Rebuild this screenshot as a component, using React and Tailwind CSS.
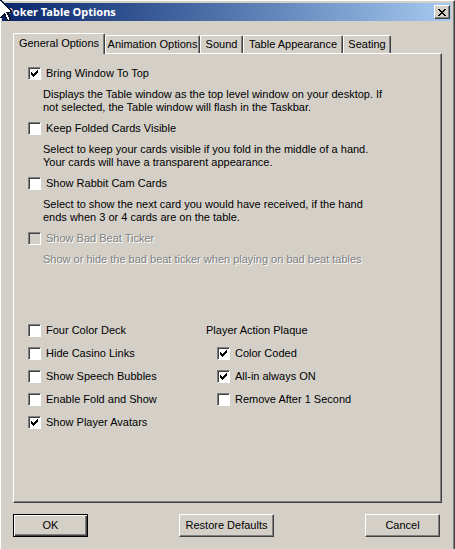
import { useState } from "react";

const raised =
  "border border-t-white border-l-white border-b-[#404040] border-r-[#404040] bg-[#d4d0c8] shadow-[inset_-1px_-1px_0_#808080]";

const behaviour = [
  {
    id: "top",
    label: "Bring Window To Top",
    checked: true,
    lines: [
      "Displays the Table window as the top level window on your desktop. If",
      "not selected, the Table window will flash in the Taskbar.",
    ],
  },
  {
    id: "folded",
    label: "Keep Folded Cards Visible",
    lines: [
      "Select to keep your cards visible if you fold in the middle of a hand.",
      "Your cards will have a transparent appearance.",
    ],
  },
  {
    id: "rabbit",
    label: "Show Rabbit Cam Cards",
    lines: [
      "Select to show the next card you would have received, if the hand",
      "ends when 3 or 4 cards are on the table.",
    ],
  },
  {
    id: "badbeat",
    label: "Show Bad Beat Ticker",
    disabled: true,
    lines: ["Show or hide the bad beat ticker when playing on bad beat tables"],
  },
];

const display = [
  { id: "deck", label: "Four Color Deck" },
  { id: "links", label: "Hide Casino Links" },
  { id: "bubbles", label: "Show Speech Bubbles" },
  { id: "fold", label: "Enable Fold and Show" },
  { id: "avatars", label: "Show Player Avatars", checked: true },
];

const plaque = [
  { id: "color", label: "Color Coded", checked: true },
  { id: "allin", label: "All-in always ON", checked: true },
  { id: "remove", label: "Remove After 1 Second" },
];

const tabs = [
  { label: "General Options", width: "w-[92px]" },
  { label: "Animation Options", width: "w-[95px]" },
  { label: "Sound", width: "w-[43px]" },
  { label: "Table Appearance", width: "w-[100px]" },
  { label: "Seating", width: "w-[48px]" },
];

function CheckOption({ id, label, checked = false, disabled = false }) {
  const [on, setOn] = useState(checked);
  return (
    <div className="flex h-[13px] items-center gap-[5px]">
      <span className="grid size-[13px] shrink-0">
        <input
          id={id}
          type="checkbox"
          checked={on}
          disabled={disabled}
          onChange={() => setOn(!on)}
          className="col-start-1 row-start-1 size-[13px] appearance-none border border-t-[#808080] border-r-white border-b-white border-l-[#808080] bg-white shadow-[inset_1px_1px_0_#404040] disabled:bg-[#d4d0c8]"
        />
        {on && (
          <svg
            viewBox="0 0 13 13"
            shapeRendering="crispEdges"
            className="pointer-events-none col-start-1 row-start-1 size-[13px]"
            aria-hidden="true"
          >
            <path d="M3 5h1v3h-1zM4 6h1v3h-1zM5 7h1v3h-1zM6 6h1v3h-1zM7 5h1v3h-1zM8 4h1v3h-1zM9 3h1v3h-1z" />
          </svg>
        )}
      </span>
      <label
        htmlFor={id}
        className={disabled ? "whitespace-nowrap text-[#808080] [text-shadow:1px_1px_0_#fff]" : "whitespace-nowrap"}
      >
        {label}
      </label>
    </div>
  );
}

export default function App() {
  const [active, setActive] = useState(0);
  return (
    <div className="flex min-h-screen flex-col border-t border-r border-l border-t-white border-r-[#404040] border-l-white bg-[#d4d0c8] font-['Liberation_Sans',Arial,sans-serif] text-[11px] leading-[13px] text-black shadow-[inset_-1px_0_0_#808080]">
      <header className="mt-[2px] mr-[3px] ml-px flex h-[18px] items-center justify-between bg-linear-to-r from-[#0a246a] to-[#a6caf0] pr-px">
        <h1 className="pb-[2px] pl-1 font-['Noto_Sans',sans-serif] text-[11px] font-bold whitespace-nowrap text-white">
          Poker Table Options
        </h1>
        <button type="button" aria-label="Close" className={`flex h-[14px] w-4 items-center justify-center ${raised}`}>
          <svg viewBox="0 0 8 7" shapeRendering="crispEdges" className="h-[7px] w-2" aria-hidden="true">
            <path d="M0 0h2v1h-2zM6 0h2v1h-2zM1 1h2v1h-2zM5 1h2v1h-2zM2 2h4v1h-4zM3 3h2v1h-2zM2 4h4v1h-4zM1 5h2v1h-2zM5 5h2v1h-2zM0 6h2v1h-2zM6 6h2v1h-2z" />
          </svg>
        </button>
      </header>
      <svg
        viewBox="0 0 12 21"
        shapeRendering="crispEdges"
        className="pointer-events-none absolute top-0 left-0 h-[21px] w-3"
        aria-hidden="true"
      >
        <path d="M0 0H1L12 11V13H9L11 18V20L9 21H7L4 16L1 18H0Z" fill="#0a1430" />
        <path d="M0 1L10 11V12H6L9 18V20H8L5 13H4L0 17Z" fill="#fff" />
      </svg>

      <main className="mt-3 mr-3 ml-3 flex flex-1 flex-col">
        <div role="tablist" className="flex items-end">
          {tabs.map((tab, i) => (
            <button
              key={tab.label}
              type="button"
              role="tab"
              aria-selected={i === active}
              onClick={() => setActive(i)}
              className={`${tab.width} ${
                i === active ? "z-10 -mb-px h-[21px] pb-px" : "h-[18px]"
              } rounded-t-[2px] border-t border-r border-l border-t-white border-r-[#404040] border-l-white bg-[#d4d0c8] whitespace-nowrap shadow-[inset_-1px_0_0_#808080]`}
            >
              {tab.label}
            </button>
          ))}
        </div>
        <section
          role="tabpanel"
          className="flex flex-1 flex-col border border-t-white border-r-[#404040] border-b-[#404040] border-l-white px-[14px] pt-[13px] shadow-[inset_-1px_-1px_0_#808080]"
        >
          <div className="flex flex-col gap-2">
            {behaviour.map(({ lines, ...option }) => (
              <div key={option.id} className="flex flex-col gap-2">
                <CheckOption {...option} />
                <p
                  className={`pl-[15px] whitespace-nowrap ${
                    option.disabled ? "text-[#808080] [text-shadow:1px_1px_0_#fff]" : ""
                  }`}
                >
                  {lines.map((line) => (
                    <span key={line} className="block">
                      {line}
                    </span>
                  ))}
                </p>
              </div>
            ))}
          </div>
          <div className="mt-[58px] flex">
            <div className="flex w-[178px] flex-col gap-[10px]">
              {display.map((option) => (
                <CheckOption key={option.id} {...option} />
              ))}
            </div>
            <fieldset className="flex flex-col gap-[10px]">
              <legend className="mb-[10px] h-[13px]">Player Action Plaque</legend>
              {plaque.map((option) => (
                <div key={option.id} className="pl-[11px]">
                  <CheckOption {...option} />
                </div>
              ))}
            </fieldset>
          </div>
        </section>
      </main>

      <footer className="mt-[11px] mr-[14px] mb-3 ml-3 flex justify-between">
        <button
          type="button"
          className="h-[23px] w-[75px] border border-black bg-[#d4d0c8] shadow-[inset_1px_1px_0_#fff,inset_-1px_-1px_0_#404040,inset_-2px_-2px_0_#808080]"
        >
          OK
        </button>
        <button type="button" className={`h-[23px] w-[95px] ${raised}`}>
          Restore Defaults
        </button>
        <button type="button" className={`h-[23px] w-[75px] ${raised}`}>
          Cancel
        </button>
      </footer>
    </div>
  );
}
